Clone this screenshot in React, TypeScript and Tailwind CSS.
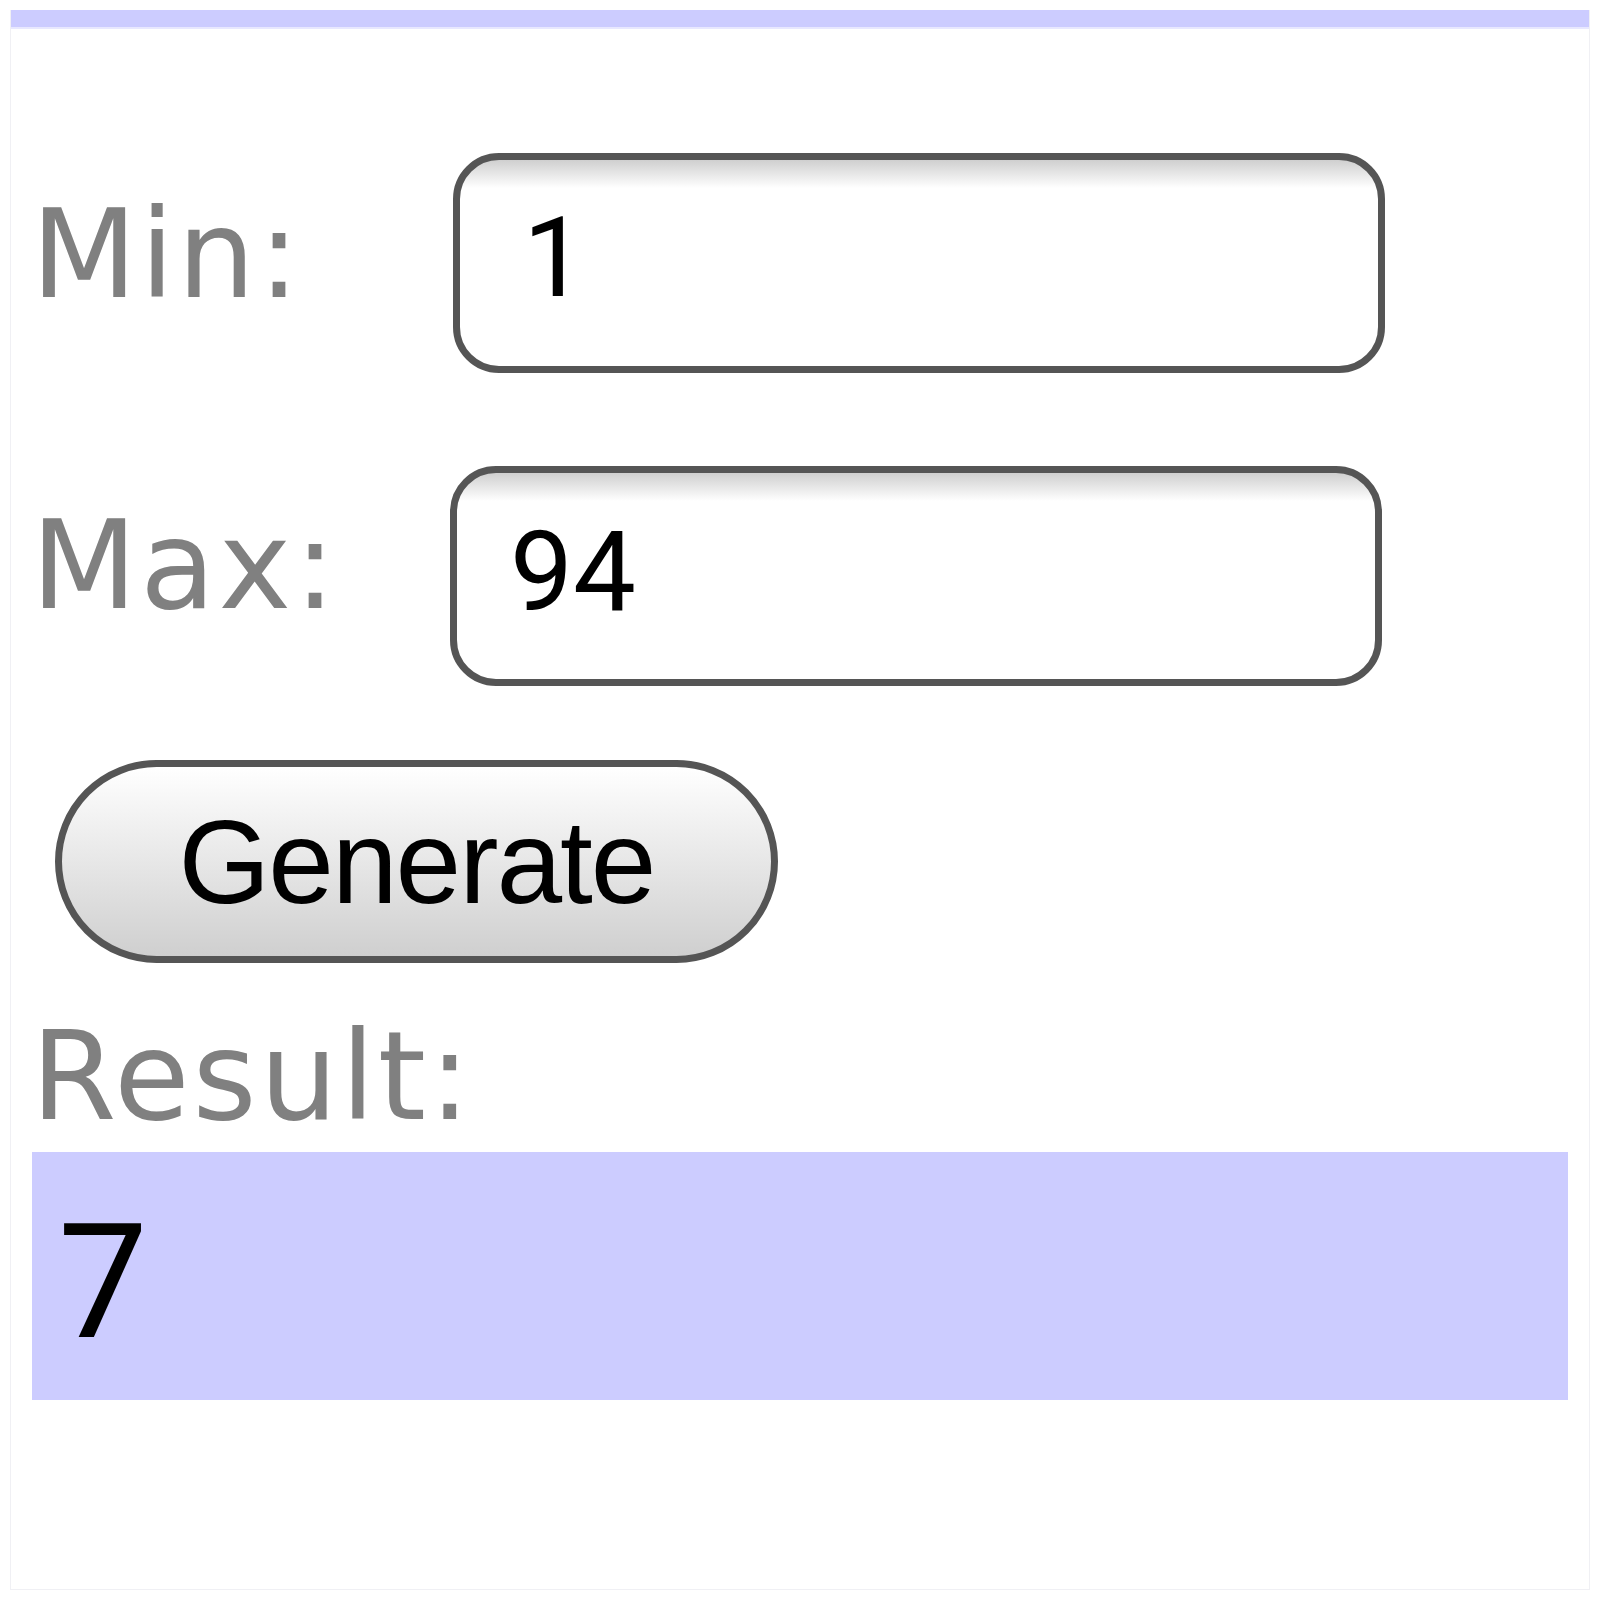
export default function App() {
  const label =
    "text-[123px] leading-none tracking-[3px] text-[#808080] font-['DejaVu_Sans',Verdana,sans-serif]";
  const field =
    "h-[220px] w-[932px] rounded-[46px] border-[7px] border-[#555555] bg-[linear-gradient(to_bottom,#cfcfcf_0px,#ffffff_28px)] flex items-start text-[112px] leading-none text-black font-['Roboto',Arial,sans-serif]";

  return (
    <div className="w-[1600px] h-[1600px] bg-white p-[10px]">
      <div className="h-[1580px] border border-t-0 border-[#f0f0f4] flex flex-col">
        {/* header strip */}
        <div className="h-[17px] bg-[#ccccff]" />
        <div className="h-[2px] bg-[#e8e8ff]" />

        {/* Min row */}
        <div className="flex items-start mt-[124px] ml-[20px]">
          <div className={`${label} w-[422px] mt-[40px]`}>Min:</div>
          <div className={`${field} pl-[63px] pt-[42px]`}>1</div>
        </div>

        {/* Max row */}
        <div className="flex items-start mt-[93px] ml-[20px]">
          <div className={`${label} w-[419px] mt-[38px]`}>Max:</div>
          <div className={`${field} pl-[53px] pt-[43px]`}>94</div>
        </div>

        <button
          type="button"
          className="mt-[74px] ml-[44px] h-[203px] w-[723px] rounded-full border-[7px] border-[#555555] bg-[linear-gradient(to_bottom,#ffffff,#cfcfcf)] flex items-center justify-center text-[118px] leading-none tracking-[-2px] text-black font-['Liberation_Sans',Arial,sans-serif]"
        >
          Generate
        </button>

        <div className={`${label} mt-[52px] ml-[20px]`}>Result:</div>

        <div className="mt-[14px] ml-[21px] w-[1536px] h-[248px] bg-[#ccccff] pl-[26px] pt-[51px] text-[160px] leading-none text-black font-['Roboto',Arial,sans-serif]">
          7
        </div>
      </div>
    </div>
  );
}
